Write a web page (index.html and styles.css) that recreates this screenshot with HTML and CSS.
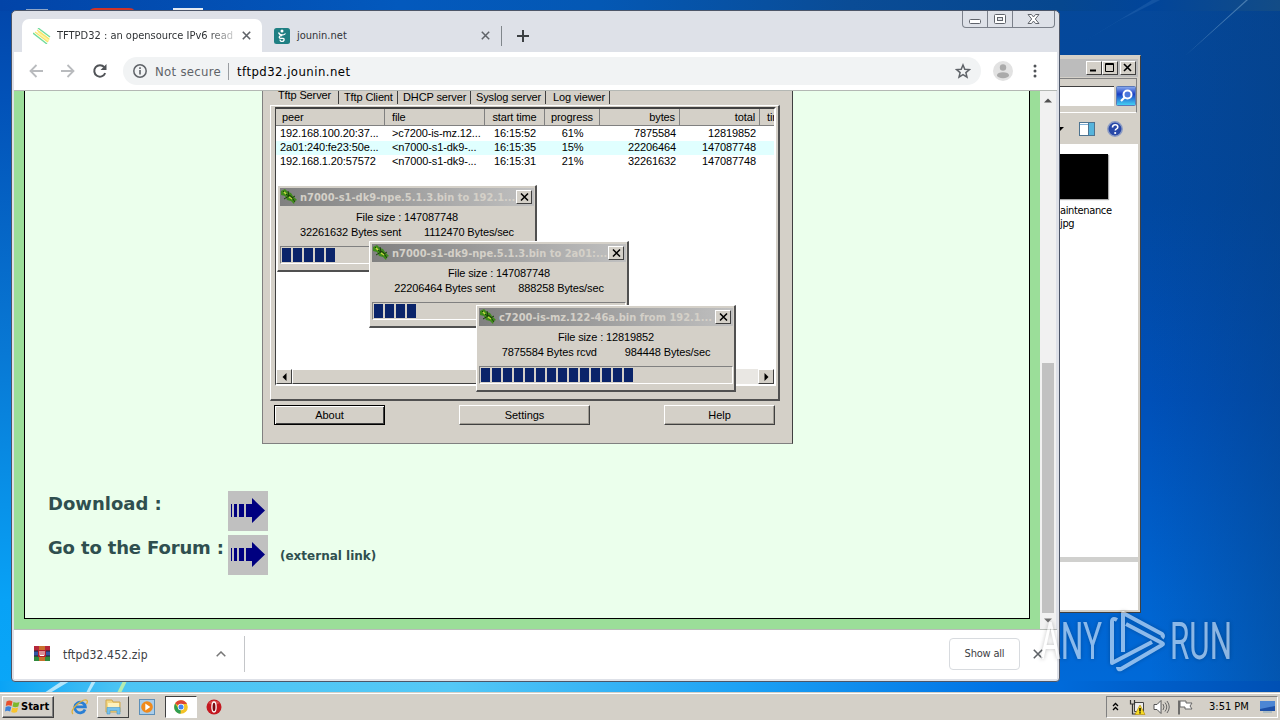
FILE: index.html
```
<!DOCTYPE html>
<html lang="en">
<head>
  <meta charset="UTF-8">
  <title>TFTPD32 : an opensource IPv6 ready TFTP server</title>
  <link rel="stylesheet" href="styles.css">
</head>
<body>
  <div class="desktop">
    <svg class="wallpaper" width="1280" height="720" viewBox="0 0 1280 720">
      <path d="M1185 56 L1248 0 L1246 0 Z" fill="#6c9cc8" opacity=".6"/>
      <path d="M1120 20 L1160 0 L1152 0 L1080 44 Z" fill="#3a78be" opacity=".3"/>
      <path d="M44 693 L62 681 L70 681 L50 693 Z M86 693 L92 681 L96 681 L89 693 Z" fill="#d5f2fc" opacity=".8"/>
      <path d="M117 693 L123 681 L127 681 L121 693 Z" fill="#b5ecb0"/>
      <path d="M26 9 h22 v1 h-22z" fill="#8fa6c8"/>
      <path d="M90 10 q2 -2 5 -2 h34 q4 0 5 2z" fill="#d03428"/>
      <path d="M173 8 h30 v2 h-30z" fill="#e3eaf2"/>
    </svg>

    <!-- Explorer window behind the browser -->
    <div class="explorer">
      <div class="explorer-title">
        <span class="win-btn"><svg width="14" height="12"><path d="M3 8.5h6" stroke="#000" stroke-width="2"/></svg></span>
        <span class="win-btn"><svg width="14" height="12"><path d="M2.5 1.5h8v8h-8zM2 2.5h9" fill="none" stroke="#000"/></svg></span>
        <span class="win-btn last"><svg width="14" height="12"><path d="M3 2l7 7M10 2l-7 7" stroke="#000" stroke-width="1.6"/></svg></span>
      </div>
      <div class="explorer-search">
        <span class="search-field"></span>
        <svg class="search-icon" width="20" height="20" viewBox="0 0 20 20">
          <defs><linearGradient id="sg" x2="0" y2="1"><stop offset="0" stop-color="#8caef0"/><stop offset=".4" stop-color="#1b3fc4"/><stop offset="1" stop-color="#45d6f5"/></linearGradient></defs>
          <rect x=".5" y=".5" width="19" height="19" rx="1" fill="url(#sg)" stroke="#5a78b8"/>
          <circle cx="11.500" cy="8.500" r="4" fill="#4c78dc" stroke="#fff" stroke-width="2"/>
          <path d="M8.500 11.500L5 15" stroke="#fff" stroke-width="2.200"/>
        </svg>
      </div>
      <div class="explorer-tools">
        <svg width="6" height="6"><path d="M0 1h5l-4 4H0z"/></svg>
        <svg class="pane-icon" width="16" height="14"><rect x=".5" y=".5" width="15" height="13" fill="#fff" stroke="#4d7390"/><path d="M1 2.500h9" stroke="#7fb0d8"/><path d="M10 1h5v12h-5z" fill="#55b4dc"/><path d="M9.500 1v12" stroke="#4d7390"/></svg>
        <svg class="help-icon" width="16" height="16"><circle cx="8" cy="8" r="7.200" fill="#2848a8" stroke="#8c9cc4" stroke-width="1.500"/><path d="M5.500 6.500q0-2.700 2.700-2.700q2.600 0 2.600 2.200q0 1.200-1.300 1.900q-1.200.6-1.200 1.700" fill="none" stroke="#fff" stroke-width="1.600"/><circle cx="8.200" cy="12" r="1.100" fill="#fff"/></svg>
      </div>
      <div class="explorer-files">
        <div class="thumb"></div>
        <div class="file-name">aintenance<br>jpg</div>
      </div>
      <div class="explorer-details"></div>
    </div>

    <!-- Browser window -->
    <div class="browser">
      <div class="caption-buttons">
        <span class="cap"><svg width="24" height="16"><rect x="6.500" y="8.500" width="11" height="4" rx="1" fill="#fff" stroke="#60646c"/></svg></span>
        <span class="cap"><svg width="24" height="16"><rect x="6.500" y="3.500" width="11" height="9" rx="1" fill="#fff" stroke="#60646c"/><rect x="9.500" y="6.500" width="5" height="3" fill="#dee1e6" stroke="#60646c"/></svg></span>
        <span class="cap wide"><svg width="40" height="16"><path d="M15 3.500h3.500l2 2.500l2-2.500h3.500l-3.700 4.500l3.700 4.500h-3.500l-2-2.500l-2 2.500h-3.500l3.700-4.500z" fill="#fff" stroke="#60646c"/></svg></span>
      </div>
      <div class="tabs">
        <div class="tab active">
          <svg width="18" height="16"><path d="M4 4l3-1l10 8l-2 3z" fill="#fdf5a0"/><path d="M5 0l12 9M0 5l14 11" stroke="#72dc9c" stroke-width="1.400"/><path d="M4 2l12 9M2 4l13 10" stroke="#f7e36c" stroke-width="1.300"/></svg>
          <span class="tab-title fade">TFTPD32 : an opensource IPv6 read</span>
          <svg class="tab-close" width="9" height="9"><path d="M.8.8l7.400 7.400M8.200.8L.8 8.200" stroke="#5f6368" stroke-width="1.600"/></svg>
        </div>
        <div class="tab">
          <svg width="16" height="16"><rect width="16" height="16" rx="2.500" fill="#1f7f83"/><circle cx="8" cy="3" r="1.500" fill="#fff"/><path d="M4.500 4.500q1 2.500 3.500 2.500t3.500-1.500M8 7.500q-3 0-2.700 2q.5 1.300 2.700.8q2.300-.2 2.100 1.700q-.5 1.700-2.500 1.400q-1.700-.3-1.400-1.700" fill="none" stroke="#fff" stroke-width="1.300"/></svg>
          <span class="tab-title second">jounin.net</span>
          <svg class="tab-close" width="9" height="9"><path d="M.8.8l7.400 7.400M8.200.8L.8 8.200" stroke="#5f6368" stroke-width="1.500"/></svg>
        </div>
        <span class="tab-divider"></span>
        <svg class="new-tab" width="12" height="12"><path d="M6 0v12M0 6h12" stroke="#3c4043" stroke-width="2"/></svg>
      </div>

      <div class="toolbar">
        <svg width="16" height="16"><path d="M15 8H3M8.500 2L2.500 8l6 6" fill="none" stroke="#b9bbbe" stroke-width="1.800"/></svg>
        <svg class="forward" width="16" height="16"><path d="M1 8h12M7.500 2l6 6l-6 6" fill="none" stroke="#b9bbbe" stroke-width="1.800"/></svg>
        <svg class="reload" width="16" height="16"><path d="M13.200 10.200A5.700 5.700 0 1 1 12.300 4.200" fill="none" stroke="#505357" stroke-width="2"/><path d="M14.500 1v6h-6z" fill="#505357"/></svg>
        <div class="omnibox">
          <svg width="14" height="14"><circle cx="7" cy="7" r="6.200" fill="none" stroke="#5f6368" stroke-width="1.500"/><path d="M7 6v4.500M7 3.300v1.600" stroke="#5f6368" stroke-width="1.600"/></svg>
          <span class="secure">Not secure</span>
          <span class="url">tftpd32.jounin.net</span>
          <svg class="star" width="16" height="16"><path d="M8 2l1.800 4.200l4.600.4l-3.500 3l1.100 4.500L8 11.700l-4 2.400l1.100-4.500l-3.500-3l4.600-.4z" fill="none" stroke="#5f6368" stroke-width="1.500"/></svg>
        </div>
        <svg class="avatar" width="20" height="20"><circle cx="10" cy="10" r="10" fill="#e2e2e2"/><circle cx="10" cy="6.500" r="3.200" fill="#aaa"/><ellipse cx="10" cy="14.200" rx="6" ry="3" fill="#aaa"/></svg>
        <svg class="menu" width="4" height="14"><circle cx="2" cy="2" r="1.500" fill="#505357"/><circle cx="2" cy="7" r="1.500" fill="#505357"/><circle cx="2" cy="12" r="1.500" fill="#505357"/></svg>
      </div>

      <div class="viewport">
        <div class="page">
          <div class="content">
            <div class="app-shot">
              <div class="app-tabs">
                <span class="t1">Tftp Server</span><span class="t2">Tftp Client</span><span class="t3">DHCP server</span><span class="t4">Syslog server</span><span class="t5">Log viewer</span>
              </div>
              <div class="tab-page">
                <div class="list">
                  <div class="row head">
                    <span>peer</span><span>file</span><span class="c">start time</span><span class="c">progress</span><span class="r">bytes</span><span class="r">total</span><span>tir</span>
                  </div>
                  <div class="row first">
                    <span>192.168.100.20:37...</span><span>&gt;c7200-is-mz.12...</span><span class="c">16:15:52</span><span class="c">61%</span><span class="r">7875584</span><span class="r">12819852</span><span></span>
                  </div>
                  <div class="row hot">
                    <span>2a01:240:fe23:50e...</span><span>&lt;n7000-s1-dk9-...</span><span class="c">16:15:35</span><span class="c">15%</span><span class="r">22206464</span><span class="r">147087748</span><span></span>
                  </div>
                  <div class="row">
                    <span>192.168.1.20:57572</span><span>&lt;n7000-s1-dk9-...</span><span class="c">16:15:31</span><span class="c">21%</span><span class="r">32261632</span><span class="r">147087748</span><span></span>
                  </div>
                  <div class="hscroll">
                    <span class="arrow"><svg width="5" height="8"><path d="M4.500 0v8L.5 4z"/></svg></span>
                    <span class="hthumb"></span>
                    <span class="arrow right"><svg width="5" height="8"><path d="M.5 0v8l4-4z"/></svg></span>
                  </div>
                </div>
              </div>
              <div class="app-buttons">
                <span class="btn default">About</span>
                <span class="btn mid">Settings</span>
                <span class="btn">Help</span>
              </div>

              <!-- transfer dialogs floating over the list -->
              <div class="dialog d1">
                <div class="dialog-title">
                  <svg width="18" height="18"><path d="M1 3l4-2l3 3l3 1l2 3l4 4l-2 1l-1 3l-3-3l-4-1l-2-4l-4-1z" fill="#3f8b1c"/><path d="M3 3l4 4l4 1l4 6M8 3l1 5l-5 3M10 11l5-3" fill="none" stroke="#1d3f0a"/><path d="M4 4l2 2M9 9l3 2" stroke="#c8d840" stroke-width="1.500"/></svg>
                  <b>n7000-s1-dk9-npe.5.1.3.bin to 192.1...</b>
                  <span class="x"><svg width="9" height="8"><path d="M1 .5l7 7M8 .5l-7 7" stroke="#000" stroke-width="1.500"/></svg></span>
                </div>
                <div class="size">File size : 147087748</div>
                <div class="speed"><span>32261632 Bytes sent</span><span>1112470 Bytes/sec</span></div>
                <div class="bar"><i></i><i></i><i></i><i></i><i></i></div>
              </div>
              <div class="dialog d2">
                <div class="dialog-title">
                  <svg width="18" height="18"><path d="M1 3l4-2l3 3l3 1l2 3l4 4l-2 1l-1 3l-3-3l-4-1l-2-4l-4-1z" fill="#3f8b1c"/><path d="M3 3l4 4l4 1l4 6M8 3l1 5l-5 3M10 11l5-3" fill="none" stroke="#1d3f0a"/><path d="M4 4l2 2M9 9l3 2" stroke="#c8d840" stroke-width="1.500"/></svg>
                  <b>n7000-s1-dk9-npe.5.1.3.bin to 2a01:...</b>
                  <span class="x"><svg width="9" height="8"><path d="M1 .5l7 7M8 .5l-7 7" stroke="#000" stroke-width="1.500"/></svg></span>
                </div>
                <div class="size">File size : 147087748</div>
                <div class="speed"><span>22206464 Bytes sent</span><span>888258 Bytes/sec</span></div>
                <div class="bar"><i></i><i></i><i></i><i></i></div>
              </div>
              <div class="dialog d3">
                <div class="dialog-title">
                  <svg width="18" height="18"><path d="M1 3l4-2l3 3l3 1l2 3l4 4l-2 1l-1 3l-3-3l-4-1l-2-4l-4-1z" fill="#3f8b1c"/><path d="M3 3l4 4l4 1l4 6M8 3l1 5l-5 3M10 11l5-3" fill="none" stroke="#1d3f0a"/><path d="M4 4l2 2M9 9l3 2" stroke="#c8d840" stroke-width="1.500"/></svg>
                  <b>c7200-is-mz.122-46a.bin from 192.1...</b>
                  <span class="x"><svg width="9" height="8"><path d="M1 .5l7 7M8 .5l-7 7" stroke="#000" stroke-width="1.500"/></svg></span>
                </div>
                <div class="size">File size : 12819852</div>
                <div class="speed"><span>7875584 Bytes rcvd</span><span>984448 Bytes/sec</span></div>
                <div class="bar"><i></i><i></i><i></i><i></i><i></i><i></i><i></i><i></i><i></i><i></i><i></i><i></i><i></i><i></i></div>
              </div>
            </div>

            <div class="links">
              <h2>Download :</h2>
              <svg class="go" width="40" height="40"><rect width="40" height="40" fill="#c0c0c0"/><path d="M3 13h1v13H3zM6 13h3v13H6zM11 13h5v13h-5zM18 13h6V7l13 12.500L24 32v-6h-6z" fill="#000080"/></svg>
              <span></span>
              <h2 class="forum">Go to the Forum :</h2>
              <svg class="go" width="40" height="40"><rect width="40" height="40" fill="#c0c0c0"/><path d="M3 13h1v13H3zM6 13h3v13H6zM11 13h5v13h-5zM18 13h6V7l13 12.500L24 32v-6h-6z" fill="#000080"/></svg>
              <span class="external">(external link)</span>
            </div>
          </div>
        </div>
        <div class="vscroll">
          <svg width="8" height="5"><path d="M0 4.500L4 .5l4 4z" fill="#505050"/></svg>
          <div class="vthumb"></div>
          <svg width="8" height="5"><path d="M0 .5l4 4l4-4z" fill="#707070"/></svg>
        </div>
      </div>

      <div class="shelf">
        <div class="download-item">
          <svg width="16" height="16"><path d="M0 0h16v5H0z" fill="#b5273a"/><path d="M0 5h16v5H0z" fill="#3355a5"/><path d="M0 10h16v5H0z" fill="#2f8a3c"/><path d="M0 5h16M0 10h16" stroke="#28202c"/><path d="M5 0h6v15H5z" fill="#c9702c"/><path d="M4 4h8v7H4z" fill="#b41c2c"/><path d="M6 5v4.500h4V5M8 5v4" fill="none" stroke="#fff"/></svg>
          <span class="file">tftpd32.452.zip</span>
          <svg class="chev" width="10" height="6"><path d="M.7 5.300L5 1l4.300 4.300" fill="none" stroke="#777" stroke-width="1.500"/></svg>
        </div>
        <span class="show-all">Show all</span>
        <svg width="10" height="10"><path d="M.8.8l8.400 8.400M9.200.8L.8 9.200" stroke="#5f6368" stroke-width="1.600"/></svg>
      </div>
    </div>

    <svg class="watermark" width="210" height="68" viewBox="0 0 210 68">
      <text x="2" y="50" textLength="62" lengthAdjust="spacingAndGlyphs">ANY</text>
      <path d="M79 11Q74 8 74 13V54L114 33M85 43V4l39 21q2 2 0 4M88 15l36 19q2 1 0 2L83 60q-3 1-3-2" class="play"/>
      <text x="132" y="50" textLength="62" lengthAdjust="spacingAndGlyphs">RUN</text>
    </svg>

    <div class="taskbar">
      <div class="start">
        <svg width="15" height="15"><path d="M1.500 2.500q3-2 6 0L6.500 7q-3-1.700-5.700 0z" fill="#e8502c"/><path d="M8.500 3q3 1.500 6 0l-1.200 4.500q-3 1.500-5.800 0z" fill="#7cb82c"/><path d="M.6 8q3-1.500 5.700 0l-1.200 4.500q-3-1.500-5.100 0z" fill="#3c82d8"/><path d="M7.300 8.500q3 1.500 5.800 0L12 13q-3 1.500-5.800 0z" fill="#f8c42c"/></svg>
        <b>Start</b>
      </div>
      <svg class="ie" width="18" height="18"><path d="M14 11.500A5.300 5.300 0 1 1 14.300 8.800H5" fill="none" stroke="#2a7fd4" stroke-width="2.800"/><path d="M2 16q-3-3 4-9.500Q14 0 16 2.500q1 1-.5 3.500" fill="none" stroke="#e0b13c" stroke-width="1.300"/></svg>
      <span class="task raised"><svg width="17" height="17"><path d="M1 2h6l1 2h7v10H1z" fill="#f4d985" stroke="#cfa74c"/><path d="M3 5h11v5H3z" fill="#fdf2bd"/><path d="M2 16V9.500h13V16h-3v-3.500H5V16z" fill="#76c2ec" stroke="#4798cc" stroke-width=".6"/></svg></span>
      <svg class="wmp" width="16" height="16"><rect x=".5" y=".5" width="15" height="15" fill="#a9cdea" stroke="#5c8fb8"/><circle cx="8" cy="8" r="5.800" fill="#f08a1c"/><path d="M6.300 4.500l5 3.500l-5 3.500z" fill="#fff"/></svg>
      <span class="task pressed"><svg width="14" height="14"><circle cx="7" cy="7" r="6.800" fill="#f4c326"/><path d="M7 7L1.100 3.600A6.800 6.800 0 0 1 13 4H7z" fill="#dd4535"/><path d="M7 7l-.5 6.800A6.800 6.800 0 0 1 1.100 3.600L4.400 8.500z" fill="#2f9e51"/><circle cx="7" cy="7" r="3.200" fill="#fff"/><circle cx="7" cy="7" r="2.500" fill="#4384f0"/></svg></span>
      <svg class="opera" width="16" height="16"><circle cx="8" cy="8" r="7.500" fill="#c41820"/><path d="M2 4q6-5 12 0q-6 3-12 0" fill="#e46a64" opacity=".6"/><ellipse cx="8" cy="8" rx="2.100" ry="5" fill="#7c0a10" stroke="#fff" stroke-width="1.300"/></svg>
      <div class="tray">
        <svg width="7" height="9"><path d="M1 4l2.500-2.500L6 4M1 8l2.500-2.500L6 8" fill="none" stroke="#000" stroke-width="1.300"/></svg>
        <svg class="net" width="17" height="16"><path d="M5.500 3.500h9v9h-9z" fill="#eee" stroke="#444"/><path d="M1.500 1v4h4V1M3.500 5v10h4" fill="none" stroke="#333" stroke-width="1.200"/><path d="M11 6l5 9.500H6z" fill="#f7dc22" stroke="#b58d14" stroke-width=".7"/><path d="M11 9v3.500M11 13.300v1.200" stroke="#000" stroke-width="1.400"/></svg>
        <svg class="vol" width="17" height="16"><path d="M1 5.500h3l4-4v13l-4-4H1z" fill="#fff" stroke="#555"/><path d="M10 5q2 3 0 6M12 3.500q3.500 4.500 0 9M14 2q4.500 6 0 12" fill="none" stroke="#666"/></svg>
        <svg class="flag" width="17" height="16"><path d="M2 1.500v14" stroke="#555" stroke-width="1.600"/><path d="M3 2h6v2h6l-2 3l2 3H8V8H3z" fill="#fff" stroke="#666"/></svg>
        <span class="clock">3:51 PM</span>
        <svg class="show-desktop" width="15" height="12"><path d="M0 0h15v10H0z" fill="#1d50a8"/><path d="M0 0h15v5L0 8z" fill="#4d86d4"/><path d="M3 11h9" stroke="#8ab"/></svg>
      </div>
    </div>
  </div>
</body>
</html>
```
FILE: styles.css
```
* {
  box-sizing: border-box;
}
body {
  margin: 0;
  font-family: "DejaVu Sans Condensed", "DejaVu Sans", sans-serif;
  font-size: 11px;
  color: #000;
}
svg {
  display: block;
  flex: none;
}
.desktop {
  position: relative;
  width: 1280px;
  height: 720px;
  overflow: hidden;
  display: flex;
  flex-direction: column;
  justify-content: flex-end;
  background:
    linear-gradient(90deg, #0aa3f5, #4cc4f4 120px, #54c8f6 450px, #1ba0f4 750px, #0072e4 1000px, #0060cc 1140px, #0050b4) 0 681px / 1280px 39px no-repeat,
    linear-gradient(90deg, #0244a8, #0359bd 400px, #0458b4 600px, #0a4c96 850px, #06478f 1060px, #01459a 1150px, #134c86 1280px) 0 0 / 1280px 11px no-repeat,
    linear-gradient(#0246aa, #0252b8 100px, #0878d4 350px, #08a2f6 600px, #0aa8f8) 0 0 / 14px 720px no-repeat,
    linear-gradient(90deg, transparent 1150px, rgba(6, 62, 128, .45) 1280px),
    linear-gradient(#05489a, #0148a0 200px, #0050b8 400px, #0064d0 600px, #006cdc);
}
.wallpaper {
  position: absolute;
  top: 0;
  left: 0;
}

/* Explorer */
.explorer {
  position: absolute;
  left: 900px;
  top: 55px;
  width: 241px;
  height: 558px;
  padding: 3px 1px 1px 2px;
  background: #d4d0c8;
  border: 1px solid #404040;
  border-top-color: #d4d0c8;
  display: flex;
  flex-direction: column;
}
.explorer-title {
  height: 18px;
  margin-right: 1px;
  padding: 2px;
  background: #bcbcbc;
  display: flex;
  justify-content: flex-end;
}
.win-btn {
  width: 16px;
  height: 14px;
  background: #d4d0c8;
  border: 1px solid;
  border-color: #fff #404040 #404040 #fff;
}
.win-btn.last {
  margin-left: 2px;
}
.explorer-search {
  height: 35px;
  margin: 1px 2px 0 0;
  border: 1px solid #808080;
  border-bottom-color: #fff;
  display: flex;
  align-items: center;
  justify-content: flex-end;
}
.search-field {
  width: 200px;
  height: 20px;
  margin-right: 2px;
  background: #fff;
  border-top: 1px solid #404040;
}
.explorer-tools {
  height: 31px;
  display: flex;
  align-items: center;
  justify-content: flex-end;
  padding-right: 16px;
}
.pane-icon {
  margin-left: 14px;
}
.help-icon {
  margin-left: 12px;
}
.explorer-files {
  height: 413px;
  margin-right: 1px;
  padding: 10px 0 0 156px;
  background: #fff;
}
.thumb {
  width: 49px;
  height: 45px;
  background: #000;
  box-shadow: 1px 1px 1px #aaa;
}
.file-name {
  margin-top: 5px;
  line-height: 13px;
  letter-spacing: -.35px;
  padding-left: 1px;
}
.explorer-details {
  flex: 1;
  margin: 0 1px 1px 0;
  background: #fff;
  border-top: 5px solid #d0d0ce;
}

/* Browser frame */
.browser {
  position: absolute;
  left: 11px;
  top: 10px;
  width: 1049px;
  height: 672px;
  padding: 1px 2px 2px;
  background: #dee1e8;
  border: 1px solid #4d5668;
  border-radius: 5px 5px 4px 4px;
  display: flex;
  flex-direction: column;
}
.caption-buttons {
  position: absolute;
  right: 4px;
  top: 0;
  display: flex;
  border: 1px solid #7b808a;
  border-top: 0;
  border-radius: 0 0 4px 4px;
  overflow: hidden;
}
.cap {
  width: 25px;
  height: 16px;
  border-right: 1px solid #7b808a;
}
.cap.wide {
  width: 41px;
  border-right: 0;
}
.tabs {
  height: 40px;
  padding: 7px 0 0 8px;
  display: flex;
}
.tab {
  width: 239px;
  height: 33px;
  padding: 0 11px 0 12px;
  display: flex;
  align-items: center;
  color: #303336;
}
.tab.active {
  width: 240px;
  padding-left: 11px;
  background: #fff;
  border-radius: 7px 7px 0 0;
}
.tab-title {
  margin-left: 6px;
  white-space: nowrap;
}
.tab-title.second {
  margin-left: 7px;
}
.fade {
  width: 176px;
  overflow: hidden;
  -webkit-mask-image: linear-gradient(90deg, #000 150px, transparent 185px);
}
.tab-close {
  margin-left: auto;
}
.tab-divider {
  width: 1px;
  height: 20px;
  margin-top: 7px;
  background: #80868b;
}
.new-tab {
  margin: 11px 0 0 15px;
}
.toolbar {
  height: 38px;
  padding: 0 20px 0 14px;
  background: #fff;
  display: flex;
  align-items: center;
}
.forward {
  margin-left: 16px;
}
.reload {
  margin-left: 16px;
}
.omnibox {
  flex: 1;
  height: 28px;
  margin: 0 12px 0 15px;
  padding: 0 10px;
  border-radius: 14px;
  background: #f1f3f4;
  display: flex;
  align-items: center;
  font-size: 13px;
}
.secure {
  margin-left: 8px;
  padding-right: 7px;
  line-height: 17px;
  letter-spacing: .3px;
  color: #5f6368;
  border-right: 1px solid #9a9da1;
}
.url {
  margin-left: 8px;
  letter-spacing: .45px;
}
.star {
  margin-left: auto;
}
.menu {
  margin-left: 20px;
}

/* Web page */
.viewport {
  height: 539px;
  border-top: 1px solid #b4b8b4;
  display: flex;
}
.page {
  width: 1026px;
  padding: 0 10px 10px;
  background: #9bde99;
  overflow: hidden;
}
.content {
  height: 528px;
  background: #ebffec;
  border: 1px solid #000;
  border-top: 0;
}
.app-shot {
  position: relative;
  width: 531px;
  height: 353px;
  margin-left: 237px;
  padding: 0 12px 0 7px;
  background: #d4d0c8;
  border: 1px solid #808080;
  border-width: 0 1px 1px 1px;
  border-right-color: #404040;
  font-family: "Liberation Sans", Arial, sans-serif;
  font-size: 11px;
  letter-spacing: -.12px;
}
.app-tabs {
  height: 14px;
  padding-left: 3px;
  display: flex;
}
.app-tabs span {
  height: 13px;
  line-height: 12px;
  padding-left: 5px;
  white-space: nowrap;
  border-right: 1px solid #404040;
}
.app-tabs .t1 {
  width: 66px;
  line-height: 8px;
}
.app-tabs .t2 {
  width: 59px;
}
.app-tabs .t3 {
  width: 73px;
}
.app-tabs .t4 {
  width: 75px;
}
.app-tabs .t5 {
  width: 64px;
  padding-left: 7px;
}
.tab-page {
  height: 296px;
  padding: 1px 2px 0 4px;
  border: 1px solid #fff;
  border-right: 2px solid #505050;
  border-bottom: 2px solid #505050;
}
.list {
  height: 279px;
  border: 1px solid #404040;
  border-width: 2px 2px 2px 1px;
  border-right-color: #fff;
  border-bottom-color: #fff;
  background: #fff;
  display: flex;
  flex-direction: column;
}
.row {
  display: grid;
  grid-template-columns: 109px 100px 60px 55px 80px 80px 1fr;
  height: 14px;
  line-height: 13px;
}
.row span {
  padding: 0 4px;
  white-space: nowrap;
  overflow: hidden;
}
.row span:nth-child(2) {
  padding-left: 7px;
}
.row .c {
  padding: 0;
  text-align: center;
}
.row .r {
  text-align: right;
}
.row.head {
  height: 17px;
  line-height: 17px;
  background: #d4d0c8;
}
.row.head span {
  border-right: 1px solid #808080;
  border-bottom: 1px solid #808080;
}
.row.head span:nth-child(1) {
  padding-left: 6px;
}
.row.head span:last-child {
  padding-left: 7px;
  border-right: 0;
}
.first {
  margin-top: 1px;
}
.hot {
  background: #e0ffff;
}
.hscroll {
  margin-top: auto;
  height: 15px;
  display: flex;
  background: #e9e7e3;
}
.arrow {
  width: 16px;
  display: flex;
  align-items: center;
  justify-content: center;
  background: #d4d0c8;
  border: 1px solid;
  border-color: #fff #404040 #404040 #fff;
}
.arrow.right {
  margin-left: auto;
}
.hthumb {
  width: 300px;
  background: #d4d0c8;
  border: 1px solid;
  border-color: #fff #404040 #404040 #fff;
}
.app-buttons {
  margin: 4px 5px 0 4px;
  display: flex;
  justify-content: space-between;
}
.btn {
  width: 111px;
  height: 20px;
  line-height: 18px;
  text-align: center;
  letter-spacing: 0;
  border: 1px solid;
  border-color: #fff #404040 #404040 #fff;
  box-shadow: inset -1px -1px #a09c94;
}
.btn.mid {
  width: 131px;
}
.btn.default {
  border: 1px solid #000;
  box-shadow: inset 1px 1px #fff, inset -1px -1px #404040;
}

/* Transfer dialogs */
.dialog {
  position: absolute;
  width: 260px;
  height: 87px;
  padding: 2px 1px 2px 2px;
  background: #d4d0c8;
  border: 1px solid #fff;
  border-right: 2px solid #505050;
  border-bottom: 2px solid #505050;
}
.d1 {
  left: 14px;
  top: 94px;
}
.d2 {
  left: 106px;
  top: 150px;
}
.d3 {
  left: 213px;
  top: 214px;
}
.dialog-title {
  height: 18px;
  padding-right: 2px;
  background: linear-gradient(90deg, #808080, #c0c0c0);
  display: flex;
  align-items: center;
}
.dialog-title b {
  margin-left: 2px;
  flex: 1;
  font-family: "DejaVu Sans Condensed", "DejaVu Sans", sans-serif;
  font-size: 11px;
  letter-spacing: 0;
  color: #d4d0c8;
  white-space: nowrap;
}
.x {
  width: 16px;
  height: 14px;
  display: flex;
  align-items: center;
  justify-content: center;
  background: #d4d0c8;
  border: 1px solid;
  border-color: #fff #404040 #404040 #fff;
}
.size {
  margin-top: 4px;
  line-height: 15px;
  text-align: center;
}
.speed {
  line-height: 15px;
  display: flex;
  justify-content: center;
  gap: 23px;
}
.d3 .speed {
  gap: 28px;
}
.bar {
  height: 18px;
  margin-top: 6px;
  padding: 1px;
  border: 1px solid #808080;
  border-color: #808080 #fff #fff #808080;
  display: flex;
  gap: 2px;
}
.bar i {
  width: 9px;
  height: 14px;
  background: #0a246a;
}

/* Download and forum links */
.links {
  margin: 47px 0 0 23px;
  display: grid;
  grid-template-columns: 180px 40px 1fr;
  row-gap: 4px;
  font-family: Verdana, "DejaVu Sans", sans-serif;
  color: #2f4f4f;
}
.links h2 {
  margin: 0;
  font-size: 18px;
  line-height: 25px;
  white-space: nowrap;
}
.links .forum {
  letter-spacing: -.15px;
}
.external {
  padding: 13px 0 0 12px;
  font-size: 12px;
  line-height: 17px;
  font-weight: bold;
}
.vscroll {
  width: 16px;
  padding: 7px 2px 6px;
  background: #f1f1f1;
  display: flex;
  flex-direction: column;
  align-items: center;
}
.vthumb {
  width: 12px;
  height: 250px;
  margin: auto 0 5px;
  background: #c1c1c1;
}

/* Download shelf */
.shelf {
  flex: 1;
  padding: 0 14px 2px 0;
  background: #fff;
  border-top: 1px solid #b8bcb8;
  display: flex;
  align-items: center;
}
.download-item {
  width: 231px;
  height: 36px;
  padding: 0 18px 0 20px;
  border-right: 1px solid #c4c6c9;
  display: flex;
  align-items: center;
}
.file {
  margin-left: 13px;
  padding-top: 2px;
  font-size: 12px;
  letter-spacing: .15px;
  color: #3c4043;
}
.chev {
  margin-left: auto;
}
.show-all {
  width: 71px;
  height: 32px;
  margin: 0 13px 0 auto;
  line-height: 30px;
  letter-spacing: -.2px;
  text-align: center;
  color: #3c4043;
  border: 1px solid #d8dbdf;
  border-radius: 4px;
}

.watermark {
  position: absolute;
  left: 1038px;
  top: 609px;
  font-family: Roboto, sans-serif;
  font-size: 51px;
  fill: #fff;
  opacity: .55;
  filter: drop-shadow(0 0 2px rgba(0, 0, 0, .45));
}
.play {
  fill: none;
  stroke: #fff;
  stroke-width: 4;
  stroke-linejoin: round;
}

/* Taskbar */
.taskbar {
  position: relative;
  height: 28px;
  padding: 2px 2px 2px;
  background: #d4d0c8;
  border-top: 1px solid #d4d0c8;
  box-shadow: inset 0 1px #fff;
  display: flex;
  align-items: center;
}
.start {
  width: 52px;
  height: 22px;
  padding-left: 2px;
  display: flex;
  align-items: center;
  border: 1px solid;
  border-color: #fff #404040 #404040 #fff;
  box-shadow: inset -1px -1px #808080;
}
.start b {
  margin-left: 1px;
}
.ie {
  margin-left: 17px;
}
.task {
  width: 32px;
  height: 22px;
  display: flex;
  align-items: center;
  justify-content: center;
  border: 1px solid;
}
.raised {
  margin-left: 8px;
  border-color: #fff #404040 #404040 #fff;
}
.pressed {
  background: #fff;
  margin-left: 10px;
  border-color: #404040 #fff #fff #404040;
}
.wmp {
  margin-left: 10px;
}
.opera {
  margin-left: 9px;
}
.tray {
  width: 172px;
  height: 22px;
  margin-left: auto;
  padding: 0 2px 0 5px;
  border: 1px solid;
  border-color: #808080 #fff #fff #808080;
  display: flex;
  align-items: center;
}
.net {
  margin-left: 10px;
}
.vol {
  margin-left: 7px;
}
.flag {
  margin-left: 7px;
}
.clock {
  margin-left: 15px;
  white-space: nowrap;
}
.show-desktop {
  margin-left: auto;
}
```
